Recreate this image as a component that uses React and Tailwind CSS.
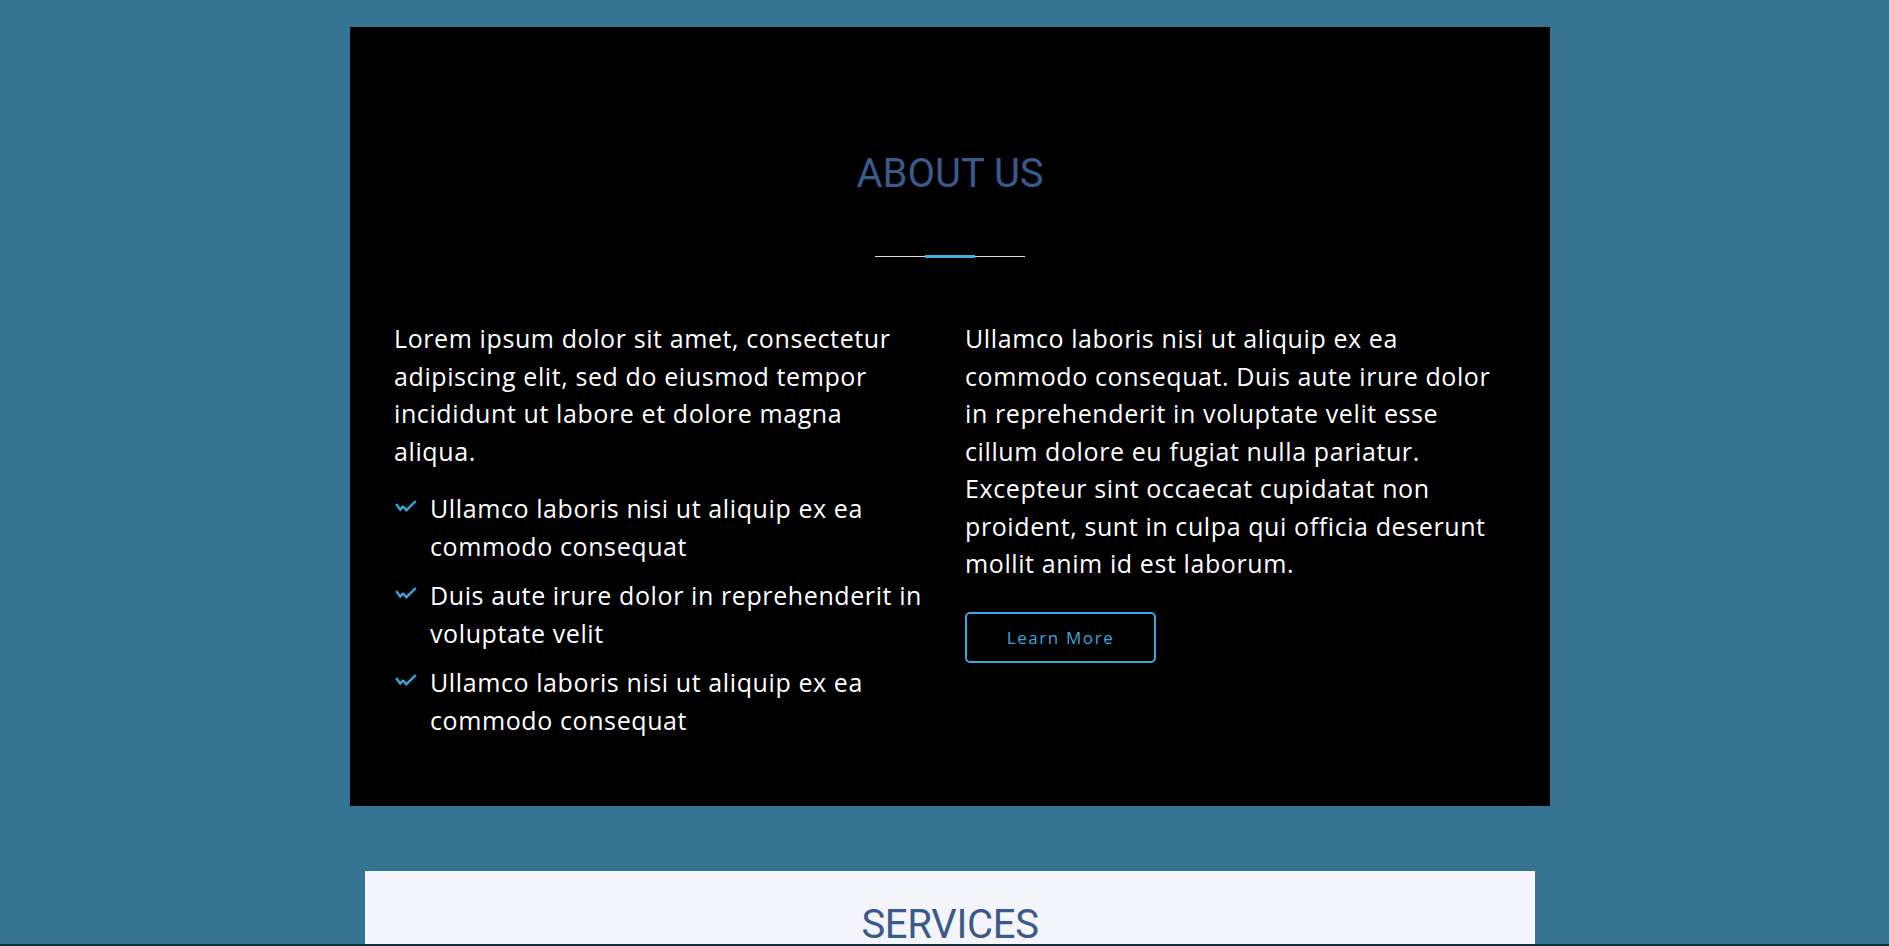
import React from "react";

function CheckDouble() {
  return (
    <svg width="24" height="12" viewBox="0 0 24 12" fill="none" stroke="#3ba6de" strokeWidth="2.4" strokeLinecap="butt" strokeLinejoin="miter">
      <path d="M1.2 4 L5.2 9.6 L8.4 6" />
      <path d="M7.8 6.2 L11.4 10.2 L20.8 1" />
    </svg>
  );
}

const bullets = [
  ["Ullamco laboris nisi ut aliquip ex ea", "commodo consequat"],
  ["Duis aute irure dolor in reprehenderit in", "voluptate velit"],
  ["Ullamco laboris nisi ut aliquip ex ea", "commodo consequat"],
];

const rightLines = [
  "Ullamco laboris nisi ut aliquip ex ea",
  "commodo consequat. Duis aute irure dolor",
  "in reprehenderit in voluptate velit esse",
  "cillum dolore eu fugiat nulla pariatur.",
  "Excepteur sint occaecat cupidatat non",
  "proident, sunt in culpa qui officia deserunt",
  "mollit anim id est laborum.",
];

const leftLines = [
  "Lorem ipsum dolor sit amet, consectetur",
  "adipiscing elit, sed do eiusmod tempor",
  "incididunt ut labore et dolore magna",
  "aliqua.",
];

function Lines({ lines }) {
  return lines.map((l, i) => (
    <React.Fragment key={i}>
      {l}
      {i < lines.length - 1 && <br />}
    </React.Fragment>
  ));
}

export default function App() {
  return (
    <div className="h-screen overflow-hidden bg-[#367591] pt-[27px] pl-[11px] font-['Open_Sans',sans-serif]">
      <section className="mx-auto w-[1200px] bg-black pt-[123px] pb-[67px]">
        <h2 className="text-center font-['Roboto',sans-serif] text-[40px] leading-[48px] font-normal text-[#3a5a8c]">
          ABOUT US
        </h2>
        <div className="mx-auto mt-[57px] flex h-[3px] w-[150px] items-center">
          <div className="h-px w-[50px] bg-[#dcdcdc]" />
          <div className="h-[3px] w-[50px] bg-[#42b0e0]" />
          <div className="h-px w-[50px] bg-[#dcdcdc]" />
        </div>
        <div className="mt-[62px] grid grid-cols-2 gap-x-[30px] px-[44px] text-[25px] leading-[37.5px] tracking-[0.6px] text-white">
          <div>
            <p className="mb-[20px] whitespace-nowrap">
              <Lines lines={leftLines} />
            </p>
            <ul className="flex flex-col gap-3">
              {bullets.map((b, i) => (
                <li key={i} className="flex">
                  <span className="flex w-[36px] shrink-0 pl-[1px] pt-[10px]">
                    <span className="h-[12px]">
                      <CheckDouble />
                    </span>
                  </span>
                  <span className="whitespace-nowrap">
                    {b[0]}
                    <br />
                    {b[1]}
                  </span>
                </li>
              ))}
            </ul>
          </div>
          <div>
            <p className="whitespace-nowrap">
              <Lines lines={rightLines} />
            </p>
            <button className="mt-[29px] flex h-[51px] w-[191px] items-center justify-center rounded-[5px] border-2 border-[#3ba6de] text-[17px] leading-none tracking-[1.6px] text-[#3ba6de]">
              Learn More
            </button>
          </div>
        </div>
      </section>
      <section className="mx-auto mt-[65px] w-[1170px] bg-[#f4f5fb] pt-[30px] pb-[200px]">
        <h2 className="text-center font-['Roboto',sans-serif] text-[40px] leading-[48px] font-normal tracking-[-0.3px] text-[#3a5a8c]">
          SERVICES
        </h2>
      </section>
      <div className="fixed bottom-0 left-0 h-[2px] w-full bg-[#12303c]" />
    </div>
  );
}
